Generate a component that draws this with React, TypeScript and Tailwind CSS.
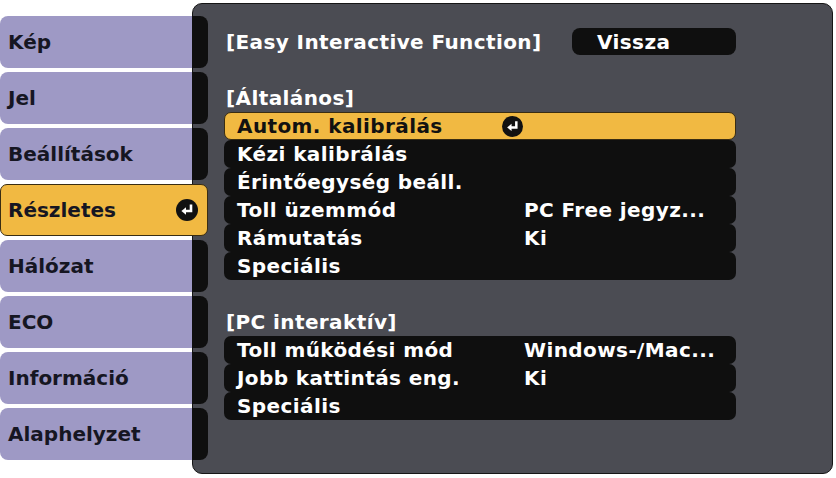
const tabs = ['Kép', 'Jel', 'Beállítások', 'Részletes', 'Hálózat', 'ECO', 'Információ', 'Alaphelyzet']
const selectedTab = 'Részletes'

type Row = { label: string; value?: string; active?: boolean }

const general: Row[] = [
  { label: 'Autom. kalibrálás', active: true },
  { label: 'Kézi kalibrálás' },
  { label: 'Érintőegység beáll.' },
  { label: 'Toll üzemmód', value: 'PC Free jegyz...' },
  { label: 'Rámutatás', value: 'Ki' },
  { label: 'Speciális' },
]

const pcInteractive: Row[] = [
  { label: 'Toll működési mód', value: 'Windows-/Mac...' },
  { label: 'Jobb kattintás eng.', value: 'Ki' },
  { label: 'Speciális' },
]

function EnterIcon({ size = 22 }: { size?: number }) {
  return (
    <svg width={size} height={size} viewBox="0 0 22 22" className="shrink-0">
      <circle cx="11" cy="11" r="11" fill="#111" />
      <path d="M15 5.5v6.5H9" stroke="#fff" strokeWidth="2.6" fill="none" />
      <path d="M10 8.2 5.4 12l4.6 3.8z" fill="#fff" />
    </svg>
  )
}

function MenuRow({ row }: { row: Row }) {
  if (row.active) {
    return (
      <div className="flex h-[28px] items-center rounded-[7px] border border-[#3a2d12] bg-[#f1b942] pl-[12px] text-[#111]">
        <span className="w-[265px] whitespace-nowrap">{row.label}</span>
        <EnterIcon size={21} />
      </div>
    )
  }
  return (
    <div className="flex h-[28px] items-center rounded-[7px] bg-[#0f0f0f] pl-[13px] text-white">
      <span className="w-[287px] whitespace-nowrap">{row.label}</span>
      {row.value && <span className="whitespace-nowrap">{row.value}</span>}
    </div>
  )
}

export default function App() {
  return (
    <div className="flex h-[478px] w-[836px] overflow-hidden bg-white font-['DejaVu_Sans',sans-serif] text-[20px] font-bold leading-none">
      {/* Left menu tabs */}
      <nav className="relative z-10 flex w-[208px] shrink-0 flex-col gap-[4px] pt-[16px]">
        {tabs.map(tab =>
          tab === selectedTab ? (
            <div
              key={tab}
              className="flex h-[52px] w-[208px] items-center rounded-[7px] border border-[#3a2d12] bg-[#f1b942] pl-[7px] pr-[9px] text-[#161622]"
            >
              <span>{tab}</span>
              <span className="ml-auto">
                <EnterIcon />
              </span>
            </div>
          ) : (
            <div key={tab} className="flex h-[52px]">
              <div className="flex w-[192px] items-center rounded-l-[8px] bg-[#9e99c5] pl-[8px] text-[#161622]">
                {tab}
              </div>
              <div className="w-[16px] rounded-r-[8px] bg-[#0f0f0f]" />
            </div>
          )
        )}
      </nav>

      {/* Settings panel */}
      <div className="-ml-[16px] mt-[3px] h-[471px] w-[641px] shrink-0 rounded-[10px] border border-[#161616] bg-[#4b4c53] pl-[31px] pt-[24px] tracking-[0.4px] text-white">
        <div className="flex h-[27px] w-[512px] items-center">
          <span className="ml-[2px] whitespace-nowrap">[Easy Interactive Function]</span>
          <div className="ml-auto flex h-[27px] w-[164px] items-center rounded-[8px] bg-[#0f0f0f] pl-[25px]">
            Vissza
          </div>
        </div>

        <div className="mt-[29px] flex h-[28px] items-center pl-[2px]">[Általános]</div>
        <div className="flex w-[512px] flex-col">
          {general.map(r => (
            <MenuRow key={r.label + (r.value ?? '')} row={r} />
          ))}
        </div>

        <div className="mt-[28px] flex h-[28px] items-center pl-[2px]">[PC interaktív]</div>
        <div className="flex w-[512px] flex-col">
          {pcInteractive.map(r => (
            <MenuRow key={r.label + (r.value ?? '')} row={r} />
          ))}
        </div>
      </div>
    </div>
  )
}
